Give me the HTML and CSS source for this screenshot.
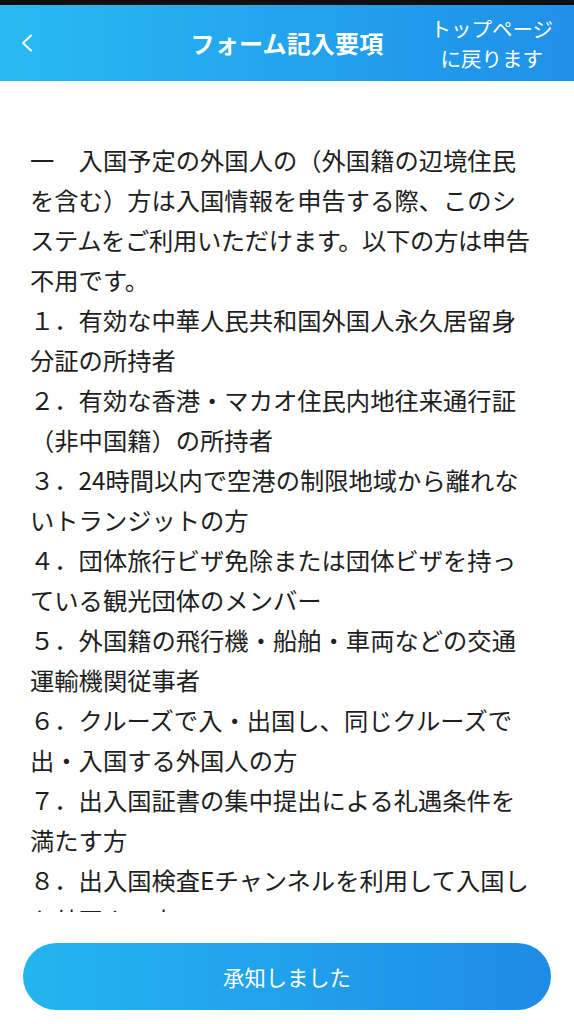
FILE: index.html
```html
<!DOCTYPE html>
<html lang="ja">
<head>
<meta charset="utf-8">
<meta name="viewport" content="width=device-width, initial-scale=1">
<title>フォーム記入要項</title>
<link rel="stylesheet" href="styles.css">
</head>
<body>
<div class="page">
  <div class="status-bar"></div>
  <header class="header">
    <div class="header-left">
      <svg class="back-icon" width="14" height="20" viewBox="0 0 14 20" aria-hidden="true">
        <polyline points="11,2.5 3,10 11,17.5" fill="none" stroke="#ffffff" stroke-width="2" stroke-linecap="round" stroke-linejoin="round"/>
      </svg>
    </div>
    <h1 class="header-title">フォーム記入要項</h1>
    <div class="header-right">
      <span class="top-link">トップページ<br>に戻ります</span>
    </div>
  </header>
  <main class="content">
    <div class="text">
      <p>一　入国予定の外国人の（外国籍の辺境住民を含む）方は入国情報を申告する際、このシ<span class="tight">ステムをご利用いただけます。以下の方は申告</span>不用です。</p>
      <p>１．有効な中華人民共和国外国人永久居留身分証の所持者</p>
      <p>２．有効な香港・マカオ住民内地往来通行証（非中国籍）の所持者</p>
      <p>３．24時間以内で空港の制限地域から離れないトランジットの方</p>
      <p>４．団体旅行ビザ免除または団体ビザを持っている観光団体のメンバー</p>
      <p>５．外国籍の飛行機・船舶・車両などの交通運輸機関従事者</p>
      <p>６．クルーズで入・出国し、同じクルーズで出・入国する外国人の方</p>
      <p>７．出入国証書の集中提出による礼遇条件を満たす方</p>
      <p>８．出入国検査Eチャンネルを利用して入国した外国人の方</p>
    </div>
  </main>
  <footer class="footer">
    <button class="confirm-btn" type="button">承知しました</button>
  </footer>
</div>
</body>
</html>
```

FILE: styles.css
```css
html, body {
  margin: 0;
  padding: 0;
  background: #ffffff;
}

body {
  font-family: "Noto Sans CJK JP", "Noto Sans", sans-serif;
}

.page {
  display: flex;
  flex-direction: column;
  height: 1024px;
  width: 574px;
  overflow: hidden;
}

.status-bar {
  height: 5px;
  background: #0e0e0e;
  flex: none;
}

.header {
  flex: none;
  height: 76px;
  display: grid;
  grid-template-columns: 1fr auto 1fr;
  align-items: center;
  background: linear-gradient(90deg, #29baf1 0%, #23a4ee 50%, #1f90e8 100%);
  color: #ffffff;
}

.header-left {
  display: flex;
  align-items: center;
  padding-left: 20px;
}

.back-icon {
  display: block;
}

.header-title {
  margin: 0;
  font-size: 24px;
  font-weight: 700;
  line-height: 30px;
  letter-spacing: 0.2px;
}

.header-right {
  display: flex;
  justify-content: flex-end;
  padding-right: 21px;
}

.top-link {
  font-size: 20.5px;
  line-height: 30px;
  text-align: center;
}

.content {
  flex: 1;
  overflow: hidden;
  padding: 59px 0 0 30px;
  min-height: 0;
}

.text {
  width: 505px;
  color: #1e1e1e;
  font-size: 24.3px;
  line-height: 40px;
}

.text p {
  margin: 0;
}

.tight {
  letter-spacing: -0.35px;
}

.footer {
  flex: none;
  height: 112px;
  box-sizing: border-box;
  padding: 31px 23px 0 23px;
}

.confirm-btn {
  display: block;
  width: 100%;
  height: 67px;
  border: none;
  border-radius: 34px;
  background: linear-gradient(90deg, #23b5ef 0%, #21a1ec 50%, #1e8be6 100%);
  color: #ffffff;
  font-family: "Noto Sans CJK JP", "Noto Sans", sans-serif;
  font-size: 21.3px;
  padding: 0;
}
```
